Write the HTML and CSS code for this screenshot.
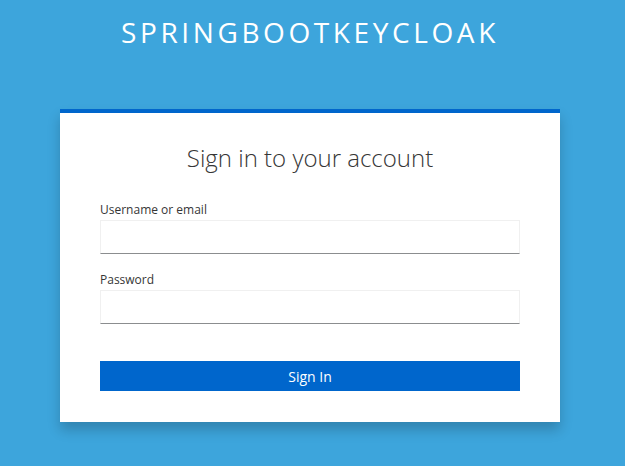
FILE: index.html
```html
<!DOCTYPE html>
<html lang="en">
	<head>
		<meta charset="UTF-8" />
		<meta name="viewport" content="width=device-width, initial-scale=1.0" />
		<title>Sign in to springbootkeycloak</title>
		<link rel="stylesheet" href="styles.css">
	</head>
	<body>
		<div class="header">SPRINGBOOTKEYCLOAK</div>

		<div class="card">
			<h1>Sign in to your account</h1>
			<form id="login">
				<div class="field">
					<label for="username">Username or email</label>
					<input type="text" id="username" name="username" />
				</div>
				<div class="field">
					<label for="password">Password</label>
					<input type="password" id="password" name="password" />
				</div>
				<button type="submit">Sign In</button>
			</form>
		</div>
	</body>
</html>
```

FILE: styles.css
```css
* {
	box-sizing: border-box;
	margin: 0;
	padding: 0;
	font-family: "Open Sans", sans-serif;
}

body {
	background-color: #3da5dc;
	min-height: 100vh;
	padding-right: 5px;
}

.header {
	color: white;
	text-align: center;
	font-size: 28px;
	letter-spacing: 3.6px;
	line-height: 40px;
	padding-top: 12px;
	height: 109px;
}

.card {
	background: white;
	width: 500px;
	margin: 0 auto;
	border-top: 4px solid #0066cc;
	padding: 30px 40px 31px;
	box-shadow: 0 8px 12px rgba(0, 0, 0, 0.2);
}

h1 {
	text-align: center;
	font-size: 24px;
	font-weight: 300;
	color: #363636;
	line-height: 30px;
	margin-bottom: 28px;
}

.field {
	margin-bottom: 17px;
}

label {
	display: block;
	font-size: 12px;
	color: #363636;
	line-height: 18px;
	margin-bottom: 1px;
}

input {
	display: block;
	width: 100%;
	height: 34px;
	border: 1px solid #f0f0f0;
	border-bottom-color: #8b8d8f;
	padding: 0 8px;
	font-size: 14px;
}

button {
	display: block;
	width: 100%;
	height: 30px;
	margin-top: 37px;
	background-color: #0066cc;
	color: white;
	border: none;
	font-size: 14px;
	cursor: pointer;
}
```
